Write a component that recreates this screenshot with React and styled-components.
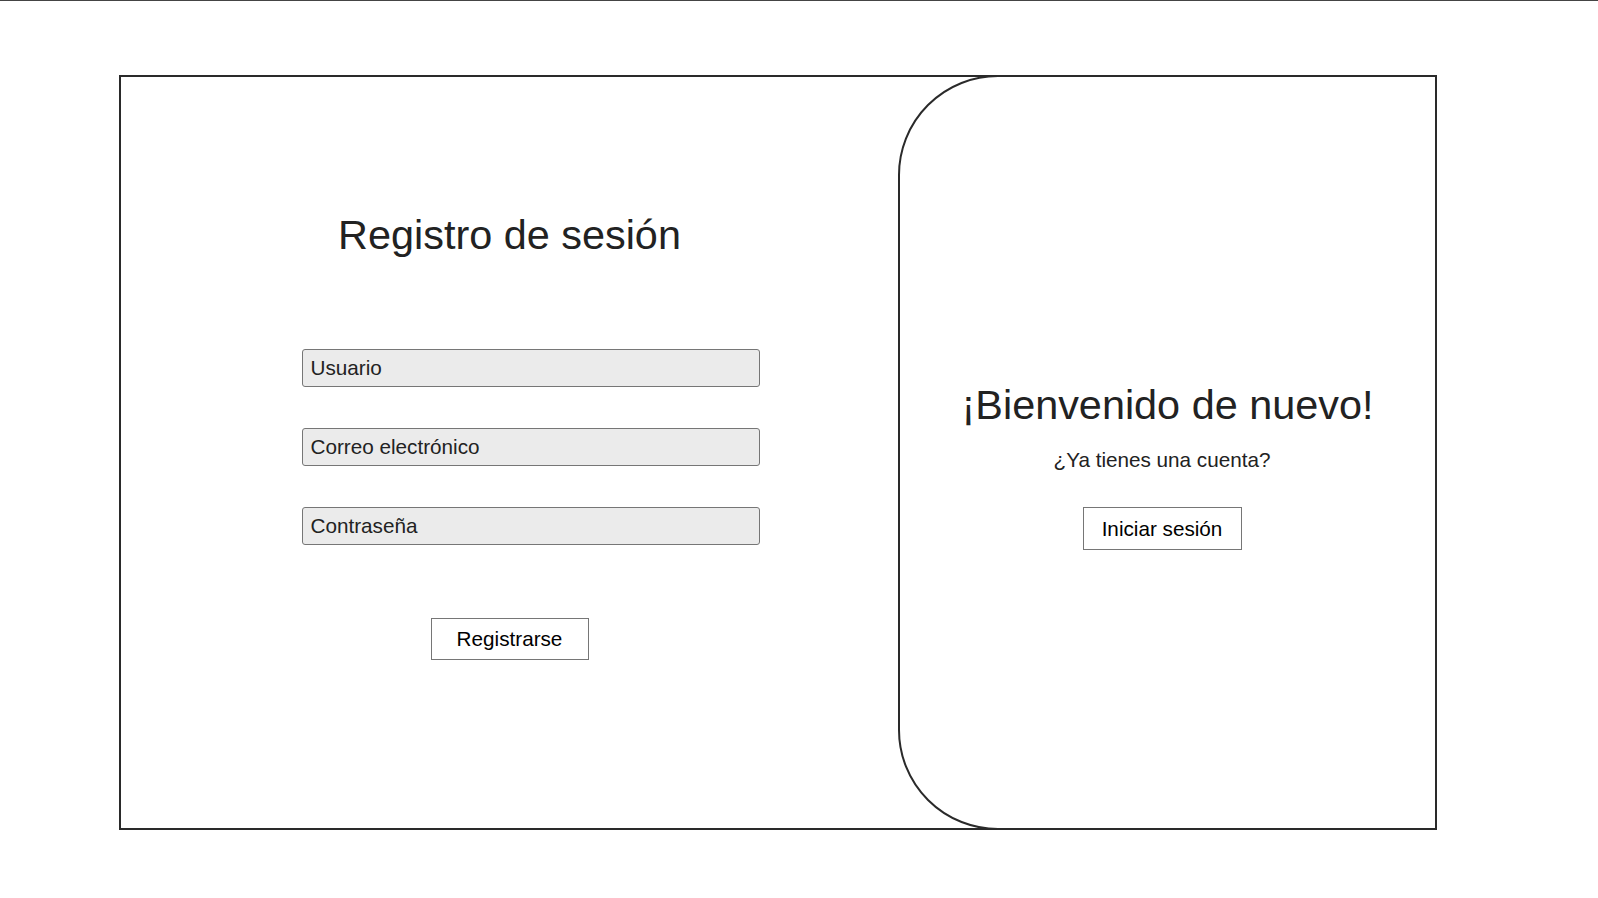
import React from 'react';
import styled, { createGlobalStyle } from 'styled-components';

const GlobalStyle = createGlobalStyle`
  html, body {
    margin: 0;
    padding: 0;
    background: #ffffff;
    font-family: 'Liberation Sans', Arial, sans-serif;
    color: #222222;
  }
`;

// Styled components
const Page = styled.div`
  min-height: 898px;
  border-top: 1px solid #444444;
  box-sizing: border-box;
  padding: 74px 0 0 119px;
`;

const Card = styled.div`
  display: grid;
  grid-template-columns: 777px 1fr;
  width: 1318px;
  height: 755px;
  box-sizing: border-box;
  border: 2px solid #2a2a2a;
`;

const FormPanel = styled.div`
  display: flex;
  flex-direction: column;
  align-items: center;
  padding-top: 134px;
`;

const WelcomePanel = styled.div`
  display: flex;
  flex-direction: column;
  align-items: center;
  margin: -2px -2px -2px 0;
  padding-top: 304px;
  border: 2px solid #2a2a2a;
  border-radius: 100px 0 0 100px;
  background: #ffffff;
`;

const Title = styled.h1`
  margin: 0;
  font-size: 41.4px;
  line-height: 48px;
  font-weight: 400;
  color: #222222;
  white-space: nowrap;
`;

const Prompt = styled.div`
  display: flex;
  flex-direction: column;
  align-items: center;
  margin-right: 11px;
`;

const Fields = styled.div`
  display: flex;
  flex-direction: column;
  gap: 41px;
  width: 458px;
  margin: 90px 0 0 42px;
`;

const Field = styled.input`
  height: 38px;
  box-sizing: border-box;
  padding: 0 8px;
  border: 1px solid #767676;
  border-radius: 3px;
  background: #ebebeb;
  font-family: 'Liberation Sans', Arial, sans-serif;
  font-size: 20.7px;
  color: #222222;
  outline: none;

  &::placeholder {
    color: #222222;
    opacity: 1;
  }
`;

const Button = styled.button`
  width: ${(p) => p.$width}px;
  height: ${(p) => p.$height}px;
  margin-top: ${(p) => p.$top}px;
  box-sizing: border-box;
  border: 1px solid #767676;
  border-radius: 0;
  background: #ffffff;
  font-family: 'Liberation Sans', Arial, sans-serif;
  font-size: 20.7px;
  color: #000000;
  cursor: pointer;
`;

const Subtitle = styled.p`
  margin: 19px 0 0 0;
  font-size: 20.7px;
  line-height: 24px;
  color: #222222;
`;

const App = () => {
  return (
    <>
      <GlobalStyle />
      <Page>
        <Card>
          <FormPanel>
            <Title>Registro de sesión</Title>
            <Fields>
              <Field type="text" placeholder="Usuario" />
              <Field type="email" placeholder="Correo electrónico" />
              <Field type="password" placeholder="Contraseña" />
            </Fields>
            <Button $width={158} $height={42} $top={73}>
              Registrarse
            </Button>
          </FormPanel>

          <WelcomePanel>
            <Title>¡Bienvenido de nuevo!</Title>
            <Prompt>
              <Subtitle>¿Ya tienes una cuenta?</Subtitle>
              <Button $width={159} $height={43} $top={35}>
                Iniciar sesión
              </Button>
            </Prompt>
          </WelcomePanel>
        </Card>
      </Page>
    </>
  );
};

export default App;
